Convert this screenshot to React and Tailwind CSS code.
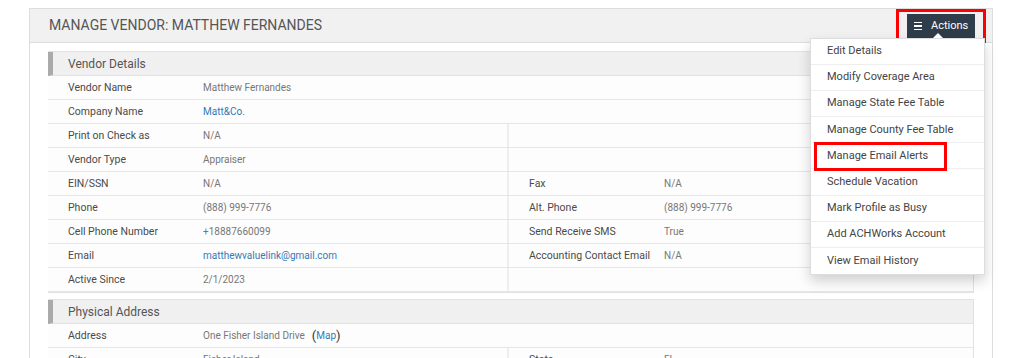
const leftRows = [
  { label: 'Vendor Name', value: 'Matthew Fernandes', full: true },
  { label: 'Company Name', value: 'Matt&Co.', link: true, full: true },
  { label: 'Print on Check as', value: 'N/A' },
  { label: 'Vendor Type', value: 'Appraiser' },
  { label: 'EIN/SSN', value: 'N/A', right: { label: 'Fax', value: 'N/A' } },
  { label: 'Phone', value: '(888) 999-7776', right: { label: 'Alt. Phone', value: '(888) 999-7776' } },
  { label: 'Cell Phone Number', value: '+18887660099', right: { label: 'Send Receive SMS', value: 'True' } },
  { label: 'Email', value: 'matthewvaluelink@gmail.com', link: true, right: { label: 'Accounting Contact Email', value: 'N/A' } },
  { label: 'Active Since', value: '2/1/2023' },
];

const menuItems = [
  'Edit Details',
  'Modify Coverage Area',
  'Manage State Fee Table',
  'Manage County Fee Table',
  'Manage Email Alerts',
  'Schedule Vacation',
  'Mark Profile as Busy',
  'Add ACHWorks Account',
  'View Email History',
];

function Cell({ label, value, link }) {
  return (
    <div className="flex items-center h-full pl-5">
      <span className="w-[135px] shrink-0 text-[10.5px] text-[#4a4a4a]">{label}</span>
      <span className={link ? 'text-[#337ab7]' : 'text-[#777]'}>{value}</span>
    </div>
  );
}

function Row({ row }) {
  if (row.full) {
    return (
      <div className="h-6 border-b border-[#e6e6e6] bg-[#fdfdfd]">
        <Cell {...row} />
      </div>
    );
  }
  return (
    <div className="h-6 border-b border-[#e6e6e6] bg-[#fdfdfd] grid grid-cols-[461px_1fr]">
      <div className="border-r-2 border-[#eee]">
        <Cell {...row} />
      </div>
      <div>{row.right && <Cell {...row.right} />}</div>
    </div>
  );
}

function SectionHeader({ title }) {
  return (
    <div className="h-6 flex items-center bg-[#f0f0f0] border-b border-[#e2e2e2] border-l-[5px] border-l-[#aaa] pl-[15px] text-[12px] text-[#555]">
      {title}
    </div>
  );
}

export default function App() {
  return (
    <div className="w-[1024px] h-[358px] overflow-hidden bg-white pt-2 pl-[29px] text-[10px] font-['Roboto',sans-serif]">
      <div className="w-[964px] h-[400px] border border-[#ddd]">
        <div className="h-[34px] flex items-center justify-between bg-[#f1f1f1] border-b border-[#ddd] pl-[19px] pr-4">
          <h1 className="text-[14px] text-[#555]">MANAGE VENDOR: MATTHEW FERNANDES</h1>
          <div className="relative mt-[1px] mr-[1px]">
            <button className="h-6 w-[68px] bg-[#2f3c4a] text-white text-[11px] flex items-center pl-[7px] gap-[9px]">
              <span className="flex flex-col gap-[2px]">
                <span className="block w-2 h-[1.5px] bg-white" />
                <span className="block w-2 h-[1.5px] bg-white" />
                <span className="block w-2 h-[1.5px] bg-white" />
              </span>
              Actions
            </button>
            <div className="absolute -left-[11px] -top-[5px] -right-[11px] -bottom-[5px] border-[3px] border-[#ff0000] pointer-events-none" />
            <div className="absolute left-[26px] top-[19px] w-0 h-0 border-x-[5px] border-x-transparent border-b-[5px] border-b-white z-20" />
            <div className="absolute right-[-10px] top-6 w-[175px] bg-white border border-[#ddd] shadow-[0_6px_12px_rgba(0,0,0,0.18)] z-10">
              {menuItems.map((item, i) => (
                <div
                  key={item}
                  className={`relative h-[26.1px] flex items-center pl-4 text-[11px] text-[#444] ${i < menuItems.length - 1 ? 'border-b border-[#eee]' : ''}`}
                >
                  {item}
                  {item === 'Manage Email Alerts' && (
                    <div className="absolute left-[3px] top-[-1px] w-[133px] h-[29px] border-[3px] border-[#ff0000]" />
                  )}
                </div>
              ))}
            </div>
          </div>
        </div>
        <div className="px-[18px] pt-2">
          <div className="border border-[#e2e2e2] border-l-0">
            <SectionHeader title="Vendor Details" />
            {leftRows.map((row) => (
              <Row key={row.label} row={row} />
            ))}
          </div>
          <div className="mt-[6px] border border-[#e2e2e2] border-l-0">
            <SectionHeader title="Physical Address" />
            <div className="h-6 border-b border-[#e6e6e6] bg-[#fdfdfd] flex items-center pl-5">
              <span className="w-[135px] shrink-0 text-[10.5px] text-[#4a4a4a]">Address</span>
              <span className="text-[#777]">One Fisher Island Drive</span>
              <span className="ml-[7px] text-[13px] leading-none text-[#333]">(</span>
              <span className="text-[#337ab7]">Map</span>
              <span className="text-[13px] leading-none text-[#333]">)</span>
            </div>
            <Row row={{ label: 'City', value: 'Fisher Island', right: { label: 'State', value: 'FL' } }} />
          </div>
        </div>
      </div>
    </div>
  );
}
